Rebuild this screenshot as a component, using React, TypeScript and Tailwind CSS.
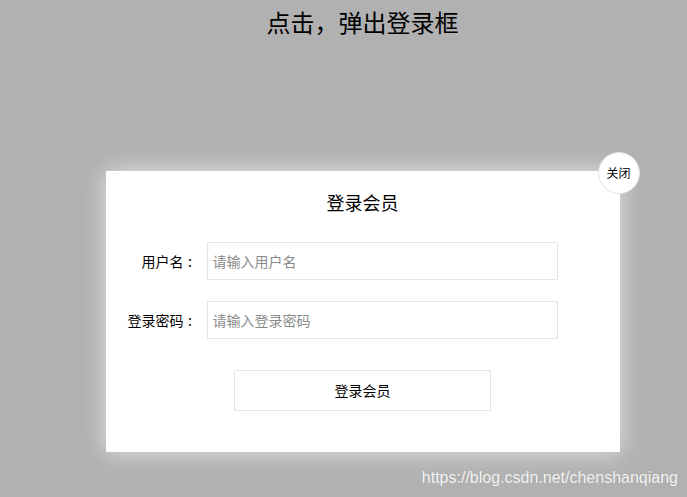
import React from 'react'

const cjk = "font-['Noto_Sans_CJK_SC','Microsoft_YaHei',sans-serif]"

const Colon = () => <span className="inline-block w-[13px] text-center">:</span>

export default function App() {
  return (
    <div className={`relative min-h-[497px] w-full overflow-hidden bg-[#b1b1b1] ${cjk}`}>
      <div className="flex flex-col items-center pl-[38px]">
        {/* Page heading */}
        <h1 className="pt-[4px] text-[24px] leading-[36px] text-black">点击，弹出登录框</h1>

        {/* Login dialog */}
        <div className="relative mt-[131px] h-[281px] w-[514px] bg-white shadow-[0_0_22px_#e4e4e4]">
          <button className="absolute right-[-20px] top-[-19px] flex h-[42px] w-[42px] items-center justify-center rounded-full border border-[#e3e3e3] bg-white text-[12px] text-black">
            关闭
          </button>

          <h2 className="pt-[18px] text-center text-[18px] leading-[27px] text-black">登录会员</h2>

          <div className="mt-[26px] flex flex-col gap-[21px]">
            <div className="flex items-center">
              <label className="w-[91px] text-right text-[14px] text-black">
                用户名<Colon />
              </label>
              <input
                className="ml-[10px] h-[38px] w-[351px] border border-[#e6e6e6] px-[5px] text-[14px] outline-none placeholder:text-[#8a8a8a]"
                placeholder="请输入用户名"
              />
            </div>
            <div className="flex items-center">
              <label className="w-[91px] text-right text-[14px] text-black">
                登录密码<Colon />
              </label>
              <input
                type="password"
                className="ml-[10px] h-[38px] w-[351px] border border-[#e6e6e6] px-[5px] text-[14px] outline-none placeholder:text-[#8a8a8a]"
                placeholder="请输入登录密码"
              />
            </div>
          </div>

          <div className="mt-[31px] flex justify-center">
            <button className="h-[41px] w-[257px] border border-[#e6e6e6] bg-white text-[14px] text-black">
              登录会员
            </button>
          </div>
        </div>
      </div>

      {/* Watermark */}
      <div className="absolute bottom-[7px] right-[9px] font-['Liberation_Sans',Arial,sans-serif] text-[16px] text-[#f4f4f4] [text-shadow:0_0_1px_#999]">
        https://blog.csdn.net/chenshanqiang
      </div>
    </div>
  )
}
